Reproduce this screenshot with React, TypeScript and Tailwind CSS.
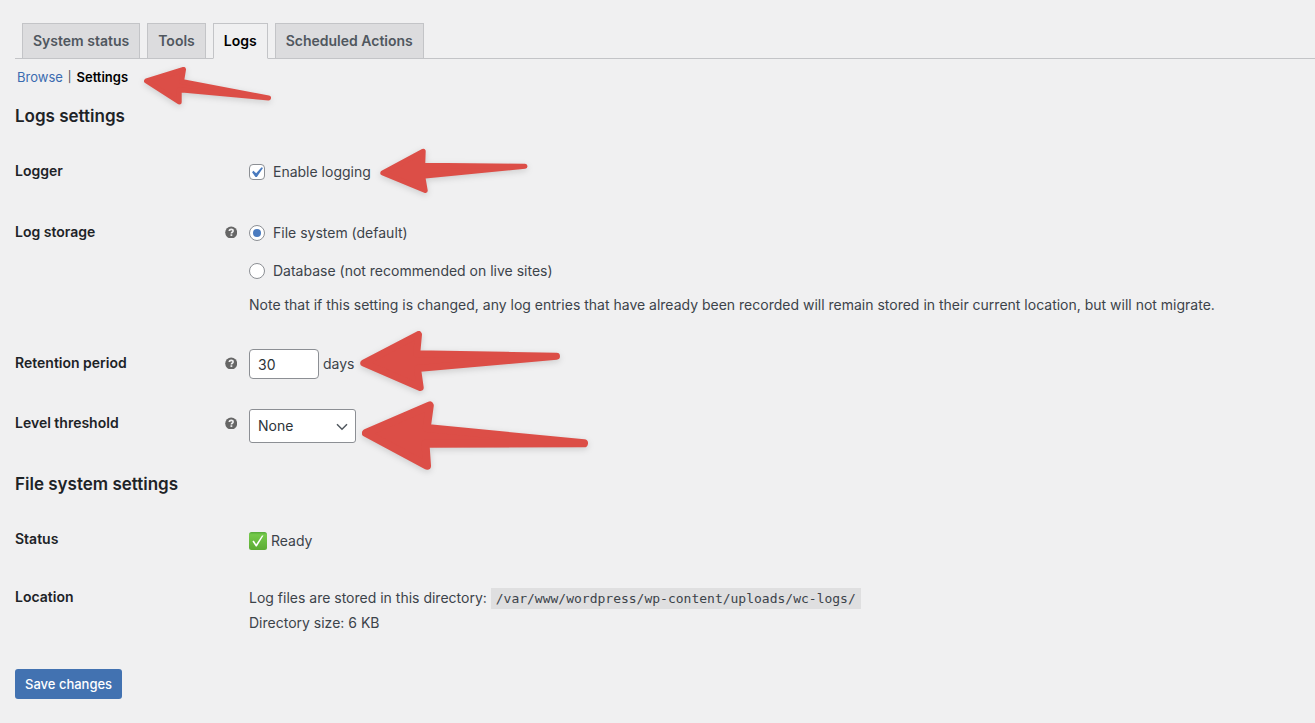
import React, { useState } from "react";

const tabs = ["System status", "Tools", "Logs", "Scheduled Actions"];

const storageOptions = [
  { value: "file", label: "File system (default)" },
  { value: "database", label: "Database (not recommended on live sites)" },
];

const levels = ["None", "Emergency", "Alert", "Critical", "Error", "Warning", "Notice", "Info", "Debug"];

type ArrowProps = {
  width: number;
  height: number;
  points: string;
  thickness: number;
  className: string;
};

function Arrow({ width, height, points, thickness, className }: ArrowProps) {
  return (
    <svg
      aria-hidden="true"
      width={width}
      height={height}
      viewBox={`0 0 ${width} ${height}`}
      className={`pointer-events-none absolute max-w-none overflow-visible drop-shadow-[0_2px_3px_rgba(0,0,0,0.15)] ${className}`}
    >
      <polygon
        points={points}
        fill="#dc4e47"
        stroke="#dc4e47"
        strokeWidth={thickness}
        strokeLinejoin="round"
      />
    </svg>
  );
}

function HelpTip({ text }: { text: string }) {
  return (
    <span role="img" aria-label={text} title={text} className="mt-1 mr-3 size-3 shrink-0">
      <svg viewBox="0 0 12 12" className="size-3">
        <circle cx="6.2" cy="6.5" r="6" fill="#666" />
        <path
          d="M4.3 5.1C4.3 3.9 5.2 3.4 6.2 3.4s1.9.5 1.9 1.6c0 1.3-1.7 1.2-1.7 2.4"
          fill="none"
          stroke="#f0f0f1"
          strokeWidth="1.6"
        />
        <rect x="5.5" y="8.3" width="1.8" height="1.6" fill="#f0f0f1" />
      </svg>
    </span>
  );
}

type RowProps = {
  label: string;
  htmlFor?: string;
  tip?: string;
  children: React.ReactNode;
};

function Row({ label, htmlFor, tip, children }: RowProps) {
  return (
    <div className="grid grid-cols-[234px_1fr]">
      <div className="flex justify-between pt-5 leading-5 font-semibold text-[#1d2327]">
        {htmlFor ? <label htmlFor={htmlFor}>{label}</label> : <span>{label}</span>}
        {tip && <HelpTip text={tip} />}
      </div>
      <div className="pt-4 pb-[14px]">{children}</div>
    </div>
  );
}

export default function App() {
  const [activeTab, setActiveTab] = useState("Logs");
  const [enabled, setEnabled] = useState(true);
  const [storage, setStorage] = useState("file");
  const [days, setDays] = useState("30");
  const [level, setLevel] = useState("None");

  return (
    <div className="min-h-screen overflow-x-hidden bg-[#f0f0f1] pt-[23px] pb-6 pl-[15px] font-['Inter','Liberation_Sans',sans-serif] text-sm text-[#3c434a]">
      <nav className="flex gap-[7px] border-b border-[#c3c4c7] pl-[7px]">
        {tabs.map((tab) => (
          <a
            key={tab}
            href="#"
            onClick={() => setActiveTab(tab)}
            className={`-mb-px border border-[#c3c4c7] px-[10px] py-[5px] leading-6 font-semibold ${
              activeTab === tab
                ? "border-b-[#f0f0f1] bg-[#f0f0f1] text-black"
                : "bg-[#dcdcde] text-[#50575e]"
            }`}
          >
            {tab}
          </a>
        ))}
      </nav>

      <div className="relative mt-[9px] flex gap-[5px] pl-[2px] text-[13px] leading-[18px]">
        <a href="#" className="text-[#3a6bb0]">Browse</a>
        <span className="text-[11px]">|</span>
        <a href="#" className="font-semibold text-black">Settings</a>
        <Arrow
          width={136}
          height={46}
          thickness={5}
          points="6.5,19 43.5,7.5 41.5,19.5 128.5,36 39.2,27.8 39.2,40"
          className="-top-[6px] left-[125px]"
        />
      </div>

      <form onSubmit={(e) => e.preventDefault()}>
        <h2 className="mt-[18px] mb-[13px] text-[17px] leading-6 font-semibold text-[#1d2327]">
          Logs settings
        </h2>

        <Row label="Logger" htmlFor="logger">
          <div className="relative mb-px flex h-[30px] items-center">
            <label className="flex items-center gap-2">
              <span className="relative size-4">
                <input
                  id="logger"
                  type="checkbox"
                  checked={enabled}
                  onChange={(e) => setEnabled(e.target.checked)}
                  className="peer block size-4 appearance-none rounded-[4px] border border-[#8c8f94] bg-white"
                />
                <svg
                  viewBox="0 0 20 20"
                  className="pointer-events-none absolute -top-[2px] -left-[3px] hidden size-[21px] max-w-none peer-checked:block"
                >
                  <path d="M14.83 4.89l1.34.94-5.81 8.38H9.02L5.78 9.67l1.34-1.25 2.57 2.4z" fill="#4a7bbf" />
                </svg>
              </span>
              Enable logging
            </label>
            <Arrow
              width={156}
              height={54}
              thickness={5}
              points="6.8,29 47.2,7.3 46.7,21.3 149,22.3 46.7,32.2 49.2,46.5"
              className="-top-[13px] left-[127px]"
            />
          </div>
        </Row>

        <Row label="Log storage" tip="This determines where log entries are saved.">
          <div role="radiogroup" aria-label="Log storage" className="flex flex-col gap-2">
            {storageOptions.map((option) => (
              <label key={option.value} className="flex h-[30px] items-center gap-2">
                <input
                  type="radio"
                  name="storage"
                  value={option.value}
                  checked={storage === option.value}
                  onChange={() => setStorage(option.value)}
                  className="flex size-4 appearance-none items-center justify-center rounded-full border border-[#8c8f94] bg-white before:size-2 before:rounded-full checked:before:bg-[#4a7bbf]"
                />
                {option.label}
              </label>
            ))}
          </div>
          <p className="mt-2 mb-[3px] leading-[22px]">
            Note that if this setting is changed, any log entries that have already been recorded will
            remain stored in their current location, but will not migrate.
          </p>
        </Row>

        <Row label="Retention period" htmlFor="retention" tip="How many days log entries are kept.">
          <div className="relative flex h-[30px] items-center gap-1">
            <input
              id="retention"
              type="text"
              inputMode="numeric"
              value={days}
              onChange={(e) => setDays(e.target.value)}
              className="h-[30px] w-[70px] rounded-[4px] border border-[#8c8f94] bg-white px-2 text-[#2c3338]"
            />
            <span>days</span>
            <Arrow
              width={212}
              height={70}
              thickness={7}
              points="9.8,37 64.5,8.5 62.7,27.7 202.5,30.3 63.5,42.4 66.2,61.5"
              className="-top-[23px] left-[105px]"
            />
          </div>
        </Row>

        <Row label="Level threshold" htmlFor="level" tip="The minimum severity level that is logged.">
          <div className="relative h-[34px]">
            <select
              id="level"
              value={level}
              onChange={(e) => setLevel(e.target.value)}
              className="h-[34px] w-[107px] appearance-none rounded-[3px] border border-[#8c8f94] bg-white pr-6 pl-2 text-[#2c3338]"
            >
              {levels.map((name) => (
                <option key={name}>{name}</option>
              ))}
            </select>
            <svg viewBox="0 0 12 8" className="pointer-events-none absolute top-[14px] left-[87px] h-2 w-3">
              <path d="M1 1.2 6 6.2 11 1.2" fill="none" stroke="#50575e" strokeWidth="1.5" />
            </svg>
            <Arrow
              width={238}
              height={80}
              thickness={8}
              points="10,37 73.8,9.5 70.7,32 228,47.3 69.5,47.7 71,69.7"
              className="-top-[13px] left-[107px]"
            />
          </div>
        </Row>

        <h2 className="mt-[15px] mb-[13px] text-[17px] leading-6 font-semibold text-[#1d2327]">
          File system settings
        </h2>

        <Row label="Status">
          <div className="flex h-7 items-center gap-1 pt-1">
            <svg viewBox="0 0 18 18" className="size-[18px]" aria-hidden="true">
              <defs>
                <linearGradient id="ready" x1="0" y1="0" x2="0" y2="1">
                  <stop offset="0" stopColor="#55a83a" />
                  <stop offset="0.15" stopColor="#74c94a" />
                  <stop offset="1" stopColor="#5cab34" />
                </linearGradient>
              </defs>
              <rect width="18" height="18" rx="2.5" fill="url(#ready)" />
              <path d="M3.4 9.4 4.8 8.6 7.2 12.2 13 3.4 14.5 3.4 7.8 14.4 6.8 14.4Z" fill="#fff" />
            </svg>
            Ready
          </div>
        </Row>

        <Row label="Location">
          <div className="pt-[2px] leading-[25px]">
            <p>
              Log files are stored in this directory:{" "}
              <code className="bg-[#dfdfe0] px-[5px] py-[3px] font-['DejaVu_Sans_Mono',monospace] text-[13px] leading-none">
                /var/www/wordpress/wp-content/uploads/wc-logs/
              </code>
            </p>
            <p>Directory size: 6 KB</p>
          </div>
        </Row>

        <button
          type="submit"
          className="mt-5 h-[30px] rounded-[3px] bg-[#4272b1] px-[10px] text-[13px] font-medium text-white"
        >
          Save changes
        </button>
      </form>
    </div>
  );
}
